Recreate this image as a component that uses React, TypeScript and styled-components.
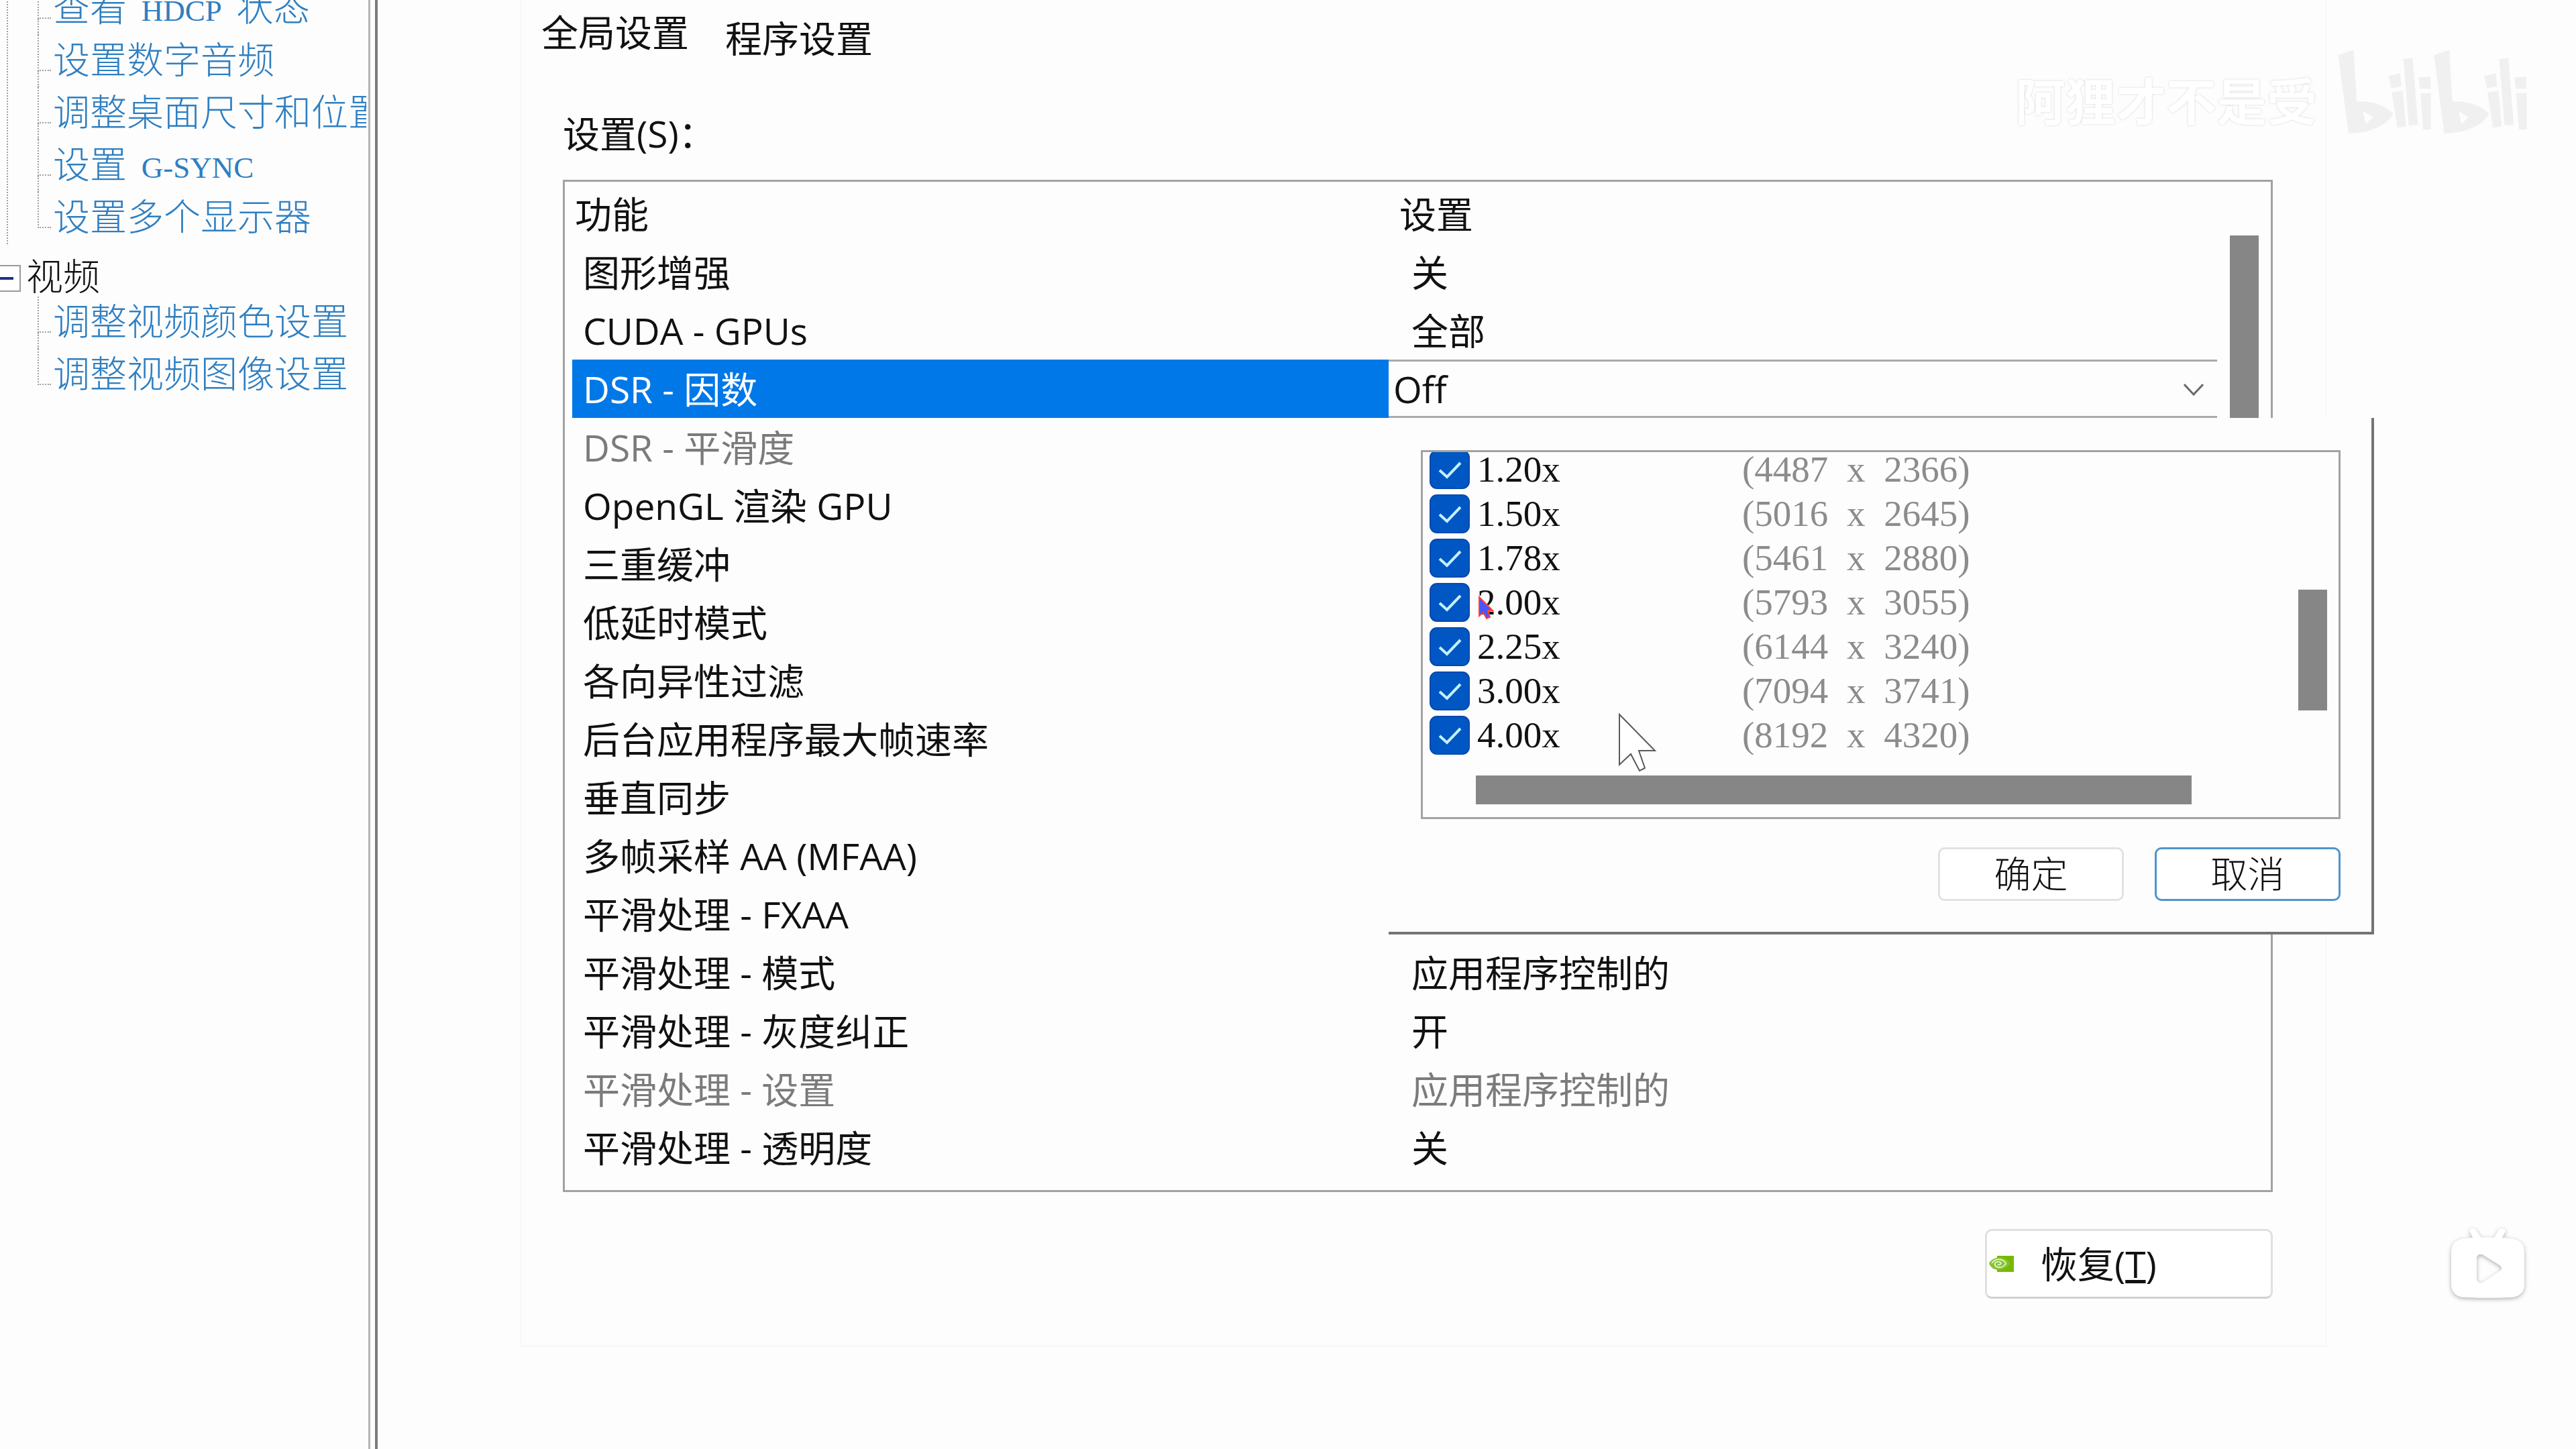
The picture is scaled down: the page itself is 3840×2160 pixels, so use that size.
import React from "react";
import styled, { createGlobalStyle, css } from "styled-components";

const GlobalStyle = createGlobalStyle`
  *, *::before, *::after { box-sizing: border-box; }
  body {
    margin: 0;
    background: #fdfdfd;
    color: #111;
    font-family: "Open Sans", "Noto Sans CJK SC", sans-serif;
    font-size: 55px;
    line-height: 78px;
    overflow: hidden;
  }
  button, input, select { font: inherit; color: inherit; margin: 0; }
`;

const song = css`
  font-family: "Liberation Serif", "Noto Sans CJK SC", serif;
  font-weight: 300;
`;

const Window = styled.div`
  display: flex;
  min-height: 100vh;
  position: relative;
  overflow: hidden;
`;

/* ---------- navigation tree ---------- */

const Sidebar = styled.nav`
  flex: 0 0 563px;
  min-width: 0;
  display: flex;
  border-right: 4px solid #7c7c7c;
  ${song}
`;

const Tree = styled.div`
  flex: 1;
  min-width: 0;
  overflow: hidden;
  margin-right: 7px;
  padding-right: 3px;
  border-right: 3px solid #b4b4b4;
`;

const TreeScroll = styled.div`
  margin-top: -26px;
  overflow: hidden;
`;

const Branch = styled.ul<{ $linked?: boolean }>`
  list-style: none;
  margin: 0 0 0 10px;
  padding: 0 0 0 44px;
  border-left: 2px dotted ${(p) => (p.$linked ? "#a0a0a0" : "transparent")};
`;

const Leaf = styled.li`
  position: relative;
  height: 78px;
  padding-left: 23px;
  white-space: nowrap;

  &::before {
    content: "";
    position: absolute;
    left: 0;
    top: 0;
    width: 20px;
    height: 54px;
    border-left: 2px dotted #a0a0a0;
    border-bottom: 2px dotted #a0a0a0;
  }
  &:not(:last-child)::after {
    content: "";
    position: absolute;
    left: 0;
    top: 54px;
    height: 24px;
    border-left: 2px dotted #a0a0a0;
  }
`;

const TreeLink = styled.a`
  color: #2f7fc1;
  text-decoration: none;
`;

const Latin = styled.span`
  margin: 0 8px;
  font-size: 45px;
`;

const Group = styled.div`
  display: flex;
  align-items: flex-end;
  height: 78px;
`;

const GroupTitle = styled.span`
  height: 56px;
  line-height: 56px;
  margin-left: 8px;
`;

const Expander = styled.button`
  width: 40px;
  height: 40px;
  margin: 0 0 7px -9px;
  padding: 0 9px 0 0;
  display: flex;
  align-items: center;
  border: 2px solid #9a9a9a;
  background: #fff;

  &::before {
    content: "";
    width: 30px;
    height: 4px;
    background: #1c2f8f;
  }
`;

/* ---------- tab page ---------- */

const Content = styled.main`
  flex: 1;
  min-width: 0;
  margin: 0 372px 0 212px;
`;

const TabPage = styled.section`
  padding: 0 78px 69px 62px;
  border: solid #f8f8f8;
  border-width: 0 2px 3px;
`;

const Tabs = styled.div`
  display: flex;
  align-items: flex-start;
  height: 160px;
  margin-left: -32px;
`;

const Tab = styled.button<{ $active?: boolean }>`
  margin-top: ${(p) => (p.$active ? 9 : 18)}px;
  padding: 0;
  width: 274px;
  height: 78px;
  border: 0;
  background: none;
  text-align: left;
`;

const FieldLabel = styled.h2`
  margin: 0 0 30px;
  font: inherit;
`;

const Panel = styled.div`
  display: flex;
  justify-content: space-between;
  padding: 4px 18px 20px 11px;
  border: 3px solid #a2a2a2;
`;

const Table = styled.table`
  flex: 1;
  min-width: 0;
  table-layout: fixed;
  border-collapse: collapse;
  margin-right: 19px;
`;

const FeatureCol = styled.col`
  width: 1217px;
`;

const Head = styled.th`
  height: 87px;
  padding: 0 0 0 4px;
  font-weight: 400;
  text-align: left;

  & + & { padding-left: 16px; }
`;

const Row = styled.tr<{ $state?: "selected" | "disabled" }>`
  color: ${(p) => (p.$state === "disabled" ? "#7b7b7b" : "inherit")};

  & > th {
    color: ${(p) => (p.$state === "selected" ? "#fff" : "inherit")};
    background: ${(p) => (p.$state === "selected" ? "#0078e7" : "none")};
  }
`;

const Feature = styled.th`
  height: 87px;
  padding: 0 0 0 16px;
  font-weight: 400;
  text-align: left;
  white-space: nowrap;
`;

const Value = styled.td<{ $editor?: boolean }>`
  padding: 0 0 0 ${(p) => (p.$editor ? 0 : 34)}px;
`;

const ScrollTrack = styled.div`
  padding-top: 76px;
`;

const VThumb = styled.div<{ $h: number }>`
  width: 43px;
  height: ${(p) => p.$h}px;
  background: #868686;
`;

const HThumb = styled.div`
  flex: 1;
  height: 43px;
  background: #868686;
`;

const Combo = styled.div`
  position: relative;
  height: 87px;
`;

const ComboSelect = styled.select`
  display: block;
  appearance: none;
  width: 100%;
  height: 87px;
  padding: 0 80px 0 7px;
  border: solid #aaa;
  border-width: 3px 0;
  border-radius: 0;
  background: #fdfdfd;
`;

const Chevron = styled.svg`
  position: absolute;
  right: 20px;
  top: 36px;
  width: 30px;
  height: 18px;
  pointer-events: none;
`;

/* ---------- factor drop-down ---------- */

const Popup = styled.div`
  position: absolute;
  z-index: 2;
  top: 100%;
  left: 0;
  width: 1469px;
  padding: 48px 46px 46px 48px;
  border: solid #747474;
  border-width: 0 4px 4px 0;
  background: #fdfdfd;
  ${song}
`;

const ListBox = styled.div`
  display: grid;
  grid-template-columns: 1fr auto;
  grid-template-rows: 455px 1fr;
  height: 550px;
  border: 3px solid #a2a2a2;
`;

const Viewport = styled.div`
  display: flex;
  flex-direction: column;
  justify-content: flex-end;
  overflow: hidden;
  padding-left: 10px;
`;

const Option = styled.label`
  flex: none;
  display: grid;
  grid-template-columns: 60px 384px 1fr;
  column-gap: 11px;
  align-items: center;
  height: 66px;
  line-height: 66px;
`;

const CheckCell = styled.span`
  display: grid;

  & > * { grid-area: 1 / 1; }
`;

const CheckInput = styled.input`
  appearance: none;
  width: 60px;
  height: 58px;
  border: 2px solid #0049ae;
  border-radius: 11px;
  background: #0057c3;
`;

const CheckMark = styled.svg`
  width: 60px;
  height: 58px;
  pointer-events: none;
`;

const Resolution = styled.span`
  color: #8c8c8c;
`;

const Times = styled.span`
  margin: 0 14px;
`;

const ListScroll = styled.div`
  padding: 205px 17px 0 0;
`;

const ListFoot = styled.div`
  display: flex;
  grid-column: 1 / -1;
  align-items: flex-start;
  padding: 27px 219px 0 79px;
`;

const Actions = styled.div`
  display: flex;
  justify-content: flex-end;
  gap: 46px;
  margin-top: 42px;
`;

const Action = styled.button<{ $focus?: boolean }>`
  width: 277px;
  height: 80px;
  padding: 0;
  border: 3px solid ${(p) => (p.$focus ? "#4f95cb" : "#e2e2e2")};
  border-radius: 10px;
  background: #fff;
`;

const Footer = styled.div`
  display: flex;
  justify-content: flex-end;
  margin-top: 55px;
`;

const Restore = styled.button`
  display: flex;
  align-items: center;
  gap: 40px;
  width: 429px;
  height: 104px;
  padding: 0 0 0 3px;
  border: 3px solid #e0e0e0;
  border-bottom-color: #d0d0d0;
  border-radius: 10px;
  background: #fff;
`;

/* ---------- layers over the window ---------- */

const Watermark = styled.div`
  position: absolute;
  top: 72px;
  right: 72px;
  display: flex;
  align-items: flex-start;
  gap: 30px;
  font-size: 75px;
  font-weight: 700;
  color: #fff;
  text-shadow: 0 0 3px #d2d2d2;
`;

const Author = styled.span`
  margin-top: 40px;
`;

const Player = styled.button`
  position: absolute;
  right: 66px;
  bottom: 215px;
  padding: 0;
  border: 0;
  background: none;
  line-height: 0;
`;

const Pointer = styled.svg<{ $x: number; $y: number }>`
  position: absolute;
  z-index: 3;
  left: ${(p) => p.$x}px;
  top: ${(p) => p.$y}px;
  overflow: visible;
  pointer-events: none;
`;

type RowData = { name: string; value?: string; state?: "selected" | "disabled" };

const rows: RowData[] = [
  { name: "图形增强", value: "关" },
  { name: "CUDA - GPUs", value: "全部" },
  { name: "DSR - 因数", state: "selected" },
  { name: "DSR - 平滑度", state: "disabled" },
  { name: "OpenGL 渲染 GPU" },
  { name: "三重缓冲" },
  { name: "低延时模式" },
  { name: "各向异性过滤" },
  { name: "后台应用程序最大帧速率" },
  { name: "垂直同步" },
  { name: "多帧采样 AA (MFAA)" },
  { name: "平滑处理 - FXAA" },
  { name: "平滑处理 - 模式", value: "应用程序控制的" },
  { name: "平滑处理 - 灰度纠正", value: "开" },
  { name: "平滑处理 - 设置", value: "应用程序控制的", state: "disabled" },
  { name: "平滑处理 - 透明度", value: "关" },
];

const factors: [string, number, number][] = [
  ["1.20x", 4487, 2366],
  ["1.50x", 5016, 2645],
  ["1.78x", 5461, 2880],
  ["2.00x", 5793, 3055],
  ["2.25x", 6144, 3240],
  ["3.00x", 7094, 3741],
  ["4.00x", 8192, 4320],
];

const FactorPopup = () => (
  <Popup>
    <ListBox>
      <Viewport>
        {factors.map(([factor, w, h]) => (
          <Option key={factor}>
            <CheckCell>
              <CheckInput type="checkbox" defaultChecked />
              <CheckMark viewBox="0 0 60 58" fill="none" stroke="#c4f1ff" strokeWidth="4">
                <path d="M15 30 26 40 46 19" />
              </CheckMark>
            </CheckCell>
            <span>{factor}</span>
            <Resolution>
              ({w} <Times>x</Times> {h})
            </Resolution>
          </Option>
        ))}
      </Viewport>
      <ListScroll>
        <VThumb $h={180} />
      </ListScroll>
      <ListFoot>
        <HThumb />
      </ListFoot>
    </ListBox>
    <Actions>
      <Action type="button">确定</Action>
      <Action type="button" $focus>取消</Action>
    </Actions>
  </Popup>
);

const NvidiaMark = () => (
  <svg width="37" height="24" viewBox="0 0 37 24" aria-hidden="true">
    <path d="M12 0H37V24H12Z" fill="#76b900" />
    <path d="M0 11C4 4 12 2 19 3c7 1 11 5 12 9-4 6-10 9-17 9C7 21 2 17 0 11Z" fill="#86c232" />
    <path d="M4 11c4-6 12-7 17-4 3 2 4 4 4 5-3 4-8 6-12 5-3-1-5-3-4-6 2-3 7-3 9 0-1 2-3 3-5 2" fill="none" stroke="#e4f5c4" strokeWidth="2" />
  </svg>
);

const BilibiliLogo = () => (
  <svg width="284" height="130" viewBox="45 60 852 390" fill="none" stroke="#f0f0f0" aria-hidden="true">
    {[0, 428].map((x) => (
      <g key={x} transform={`translate(${x} 0)`}>
        <path d="M50 90 118 68 132 300C190 292 250 312 296 352 270 400 200 440 96 440Z" fill="#f0f0f0" />
        <path d="M160 340 206 368 172 398Z" fill="#fdfdfd" />
        <path d="M275 185 325 172 332 230 288 238Z" fill="#f0f0f0" />
        <path d="M290 258 338 250 352 410 314 414Z" fill="#f0f0f0" />
        <path d="M342 108 382 104 406 402 366 404Z" fill="#f0f0f0" />
        <path d="M410 190 462 188 462 240 416 240Z" fill="#f0f0f0" />
        <path d="M418 262 464 260 464 422 430 424Z" fill="#f0f0f0" />
      </g>
    ))}
  </svg>
);

export default function App() {
  return (
    <>
      <GlobalStyle />
      <Window>
        <Sidebar>
          <Tree>
            <TreeScroll>
              <Branch $linked>
                <Leaf><TreeLink href="#hdcp">查看 <Latin>HDCP</Latin> 状态</TreeLink></Leaf>
                <Leaf><TreeLink href="#audio">设置数字音频</TreeLink></Leaf>
                <Leaf><TreeLink href="#size">调整桌面尺寸和位置</TreeLink></Leaf>
                <Leaf><TreeLink href="#gsync">设置 <Latin>G-SYNC</Latin></TreeLink></Leaf>
                <Leaf><TreeLink href="#multi">设置多个显示器</TreeLink></Leaf>
              </Branch>
              <Group>
                <Expander type="button" aria-label="视频" />
                <GroupTitle>视频</GroupTitle>
              </Group>
              <Branch>
                <Leaf><TreeLink href="#color">调整视频颜色设置</TreeLink></Leaf>
                <Leaf><TreeLink href="#image">调整视频图像设置</TreeLink></Leaf>
              </Branch>
            </TreeScroll>
          </Tree>
        </Sidebar>

        <Content>
          <TabPage>
            <Tabs role="tablist">
              <Tab type="button" role="tab" aria-selected="true" $active>全局设置</Tab>
              <Tab type="button" role="tab" aria-selected="false">程序设置</Tab>
            </Tabs>
            <FieldLabel>设置(S)：</FieldLabel>
            <Panel>
              <Table>
                <colgroup>
                  <FeatureCol />
                  <col />
                </colgroup>
                <thead>
                  <tr>
                    <Head scope="col">功能</Head>
                    <Head scope="col">设置</Head>
                  </tr>
                </thead>
                <tbody>
                  {rows.map((row) => (
                    <Row key={row.name} $state={row.state}>
                      <Feature scope="row">{row.name}</Feature>
                      {row.state === "selected" ? (
                        <Value $editor>
                          <Combo>
                            <ComboSelect aria-label={row.name} defaultValue="Off">
                              <option>Off</option>
                            </ComboSelect>
                            <Chevron viewBox="0 0 30 18" fill="none" stroke="#6a6a6a" strokeWidth="3">
                              <path d="M1 1 15 16 29 1" />
                            </Chevron>
                            <FactorPopup />
                          </Combo>
                        </Value>
                      ) : (
                        <Value>{row.value}</Value>
                      )}
                    </Row>
                  ))}
                </tbody>
              </Table>
              <ScrollTrack>
                <VThumb $h={480} />
              </ScrollTrack>
            </Panel>
            <Footer>
              <Restore type="button">
                <NvidiaMark />
                <span>恢复(<u>T</u>)</span>
              </Restore>
            </Footer>
          </TabPage>
        </Content>

        <Watermark>
          <Author>阿狸才不是受</Author>
          <BilibiliLogo />
        </Watermark>

        <Player type="button" aria-label="播放">
          <svg width="130" height="124" viewBox="-10 -10 130 124">
            <g fill="#fff" style={{ filter: "drop-shadow(0 2px 3px rgba(0,0,0,0.3))" }}>
              <path
                fillRule="evenodd"
                d="M22 15C36 13 72 13 87 15 101 16 109 22 109 36V84C109 96 101 103 87 103 70 104 38 104 22 103 8 103 0 96 0 84V36C0 22 8 16 22 15ZM38 46V74C38 80 42 83 48 80L72 64C76 61 76 58 72 55L48 40C42 37 38 40 38 46Z"
              />
              <path d="M27 4C29-1 36-1 38 4L46 16H33ZM81 4C79-1 72-1 70 4L62 16H75Z" />
            </g>
          </svg>
        </Player>

        <Pointer $x={2413} $y={1064} width="56" height="86" viewBox="0 0 56 86">
          <path d="M1 1V76L18 60 31 85 39 81 30 55H54Z" fill="#fff" stroke="#5a5a5a" strokeWidth="2" />
        </Pointer>
        <Pointer $x={2204} $y={888} width="22" height="36" viewBox="0 0 22 36">
          <path d="M1 2V30L7 25 12 34 17 32 14 22H21Z" fill="#4a55ff" stroke="#ff4136" strokeWidth="2" />
        </Pointer>
      </Window>
    </>
  );
}
